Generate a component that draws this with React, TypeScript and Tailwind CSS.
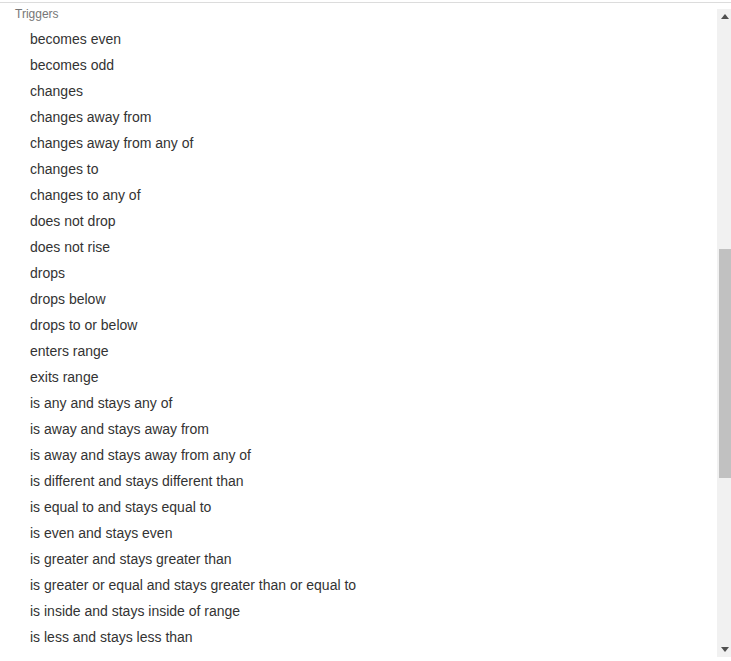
const TRIGGERS = [
  "becomes even",
  "becomes odd",
  "changes",
  "changes away from",
  "changes away from any of",
  "changes to",
  "changes to any of",
  "does not drop",
  "does not rise",
  "drops",
  "drops below",
  "drops to or below",
  "enters range",
  "exits range",
  "is any and stays any of",
  "is away and stays away from",
  "is away and stays away from any of",
  "is different and stays different than",
  "is equal to and stays equal to",
  "is even and stays even",
  "is greater and stays greater than",
  "is greater or equal and stays greater than or equal to",
  "is inside and stays inside of range",
  "is less and stays less than",
];

function Scrollbar() {
  return (
    <div className="flex w-[14px] shrink-0 flex-col bg-[#f1f1f1] mt-[6px] mb-[4px]">
      <div className="flex h-[15px] items-center justify-center pl-[2px]">
        <svg width="8" height="5" viewBox="0 0 8 5">
          <path d="M4 0L8 5H0z" fill="#505050" />
        </svg>
      </div>
      <div className="h-[225px]" />
      <div className="ml-[2px] h-[229px] bg-[#c1c1c1]" />
      <div className="flex-1" />
      <div className="flex h-[15px] items-center justify-center pl-[2px]">
        <svg width="8" height="5" viewBox="0 0 8 5">
          <path d="M0 0H8L4 5z" fill="#505050" />
        </svg>
      </div>
    </div>
  );
}

export default function App() {
  return (
    <div className="h-[661px] w-[731px] overflow-hidden bg-white font-['Liberation_Sans',Arial,sans-serif]">
      <div className="mt-[2px] flex h-[659px] border-t border-[#dcdcdc]">
        <div className="flex-1">
          {/* Group label */}
          <div className="h-[23px] pl-[15px] text-[12px] leading-[23px] text-[#777]">Triggers</div>
          {TRIGGERS.map((t) => (
            <div key={t} className="h-[26px] pl-[30px] text-[14px] leading-[26px] text-[#333]">
              {t}
            </div>
          ))}
        </div>
        <Scrollbar />
      </div>
    </div>
  );
}
